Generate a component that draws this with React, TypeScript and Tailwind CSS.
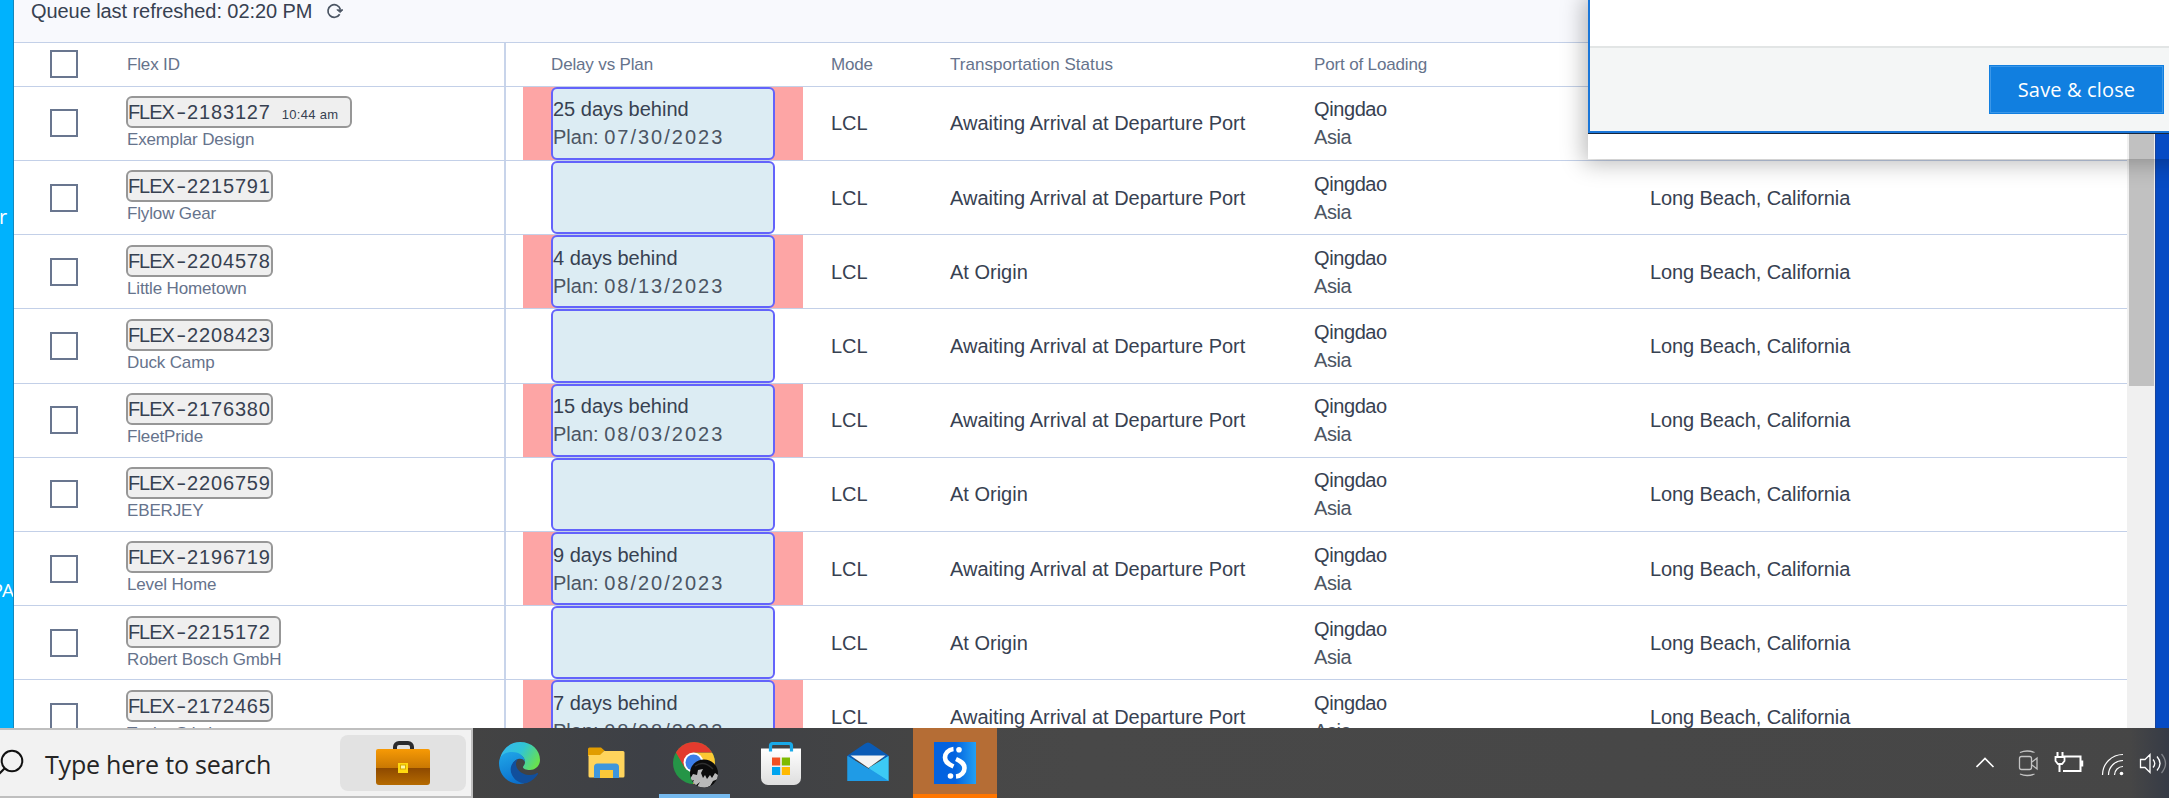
type Shipment = {
  id: string;
  customer: string;
  status: string;
  delay?: string;
  plan?: string;
  time?: string;
  trailing?: boolean;
};

const AWAITING = "Awaiting Arrival at Departure Port";
const ORIGIN = "At Origin";

const shipments: Shipment[] = [
  { id: "2183127", customer: "Exemplar Design", status: AWAITING, delay: "25 days behind", plan: "07/30/2023", time: "10:44 am" },
  { id: "2215791", customer: "Flylow Gear", status: AWAITING },
  { id: "2204578", customer: "Little Hometown", status: ORIGIN, delay: "4 days behind", plan: "08/13/2023" },
  { id: "2208423", customer: "Duck Camp", status: AWAITING },
  { id: "2176380", customer: "FleetPride", status: AWAITING, delay: "15 days behind", plan: "08/03/2023" },
  { id: "2206759", customer: "EBERJEY", status: ORIGIN },
  { id: "2196719", customer: "Level Home", status: AWAITING, delay: "9 days behind", plan: "08/20/2023" },
  { id: "2215172", customer: "Robert Bosch GmbH", status: ORIGIN, trailing: true },
  { id: "2172465", customer: "Taylor Stitch", status: AWAITING, delay: "7 days behind", plan: "08/08/2023" },
];

const COLUMNS = "grid grid-cols-[112px_378px_327px_119px_364px_336px_477px]";

function Checkbox() {
  return (
    <div className="flex items-center pl-9">
      <div className="size-7 border-2 border-[#69768f] bg-white" />
    </div>
  );
}

function HeaderRow() {
  return (
    <div className={`${COLUMNS} h-[43.8px] shrink-0 border-t border-[#c3d0e8] text-[17px] tracking-[-0.15px] text-[#66738c]`}>
      <Checkbox />
      <div className="flex items-center pl-px">Flex ID</div>
      <div className="flex items-center border-l-2 border-[#c8d4ea] pl-[45px]">Delay vs Plan</div>
      <div className="flex items-center">Mode</div>
      <div className="flex items-center tracking-[0.05px]">Transportation Status</div>
      <div className="flex items-center">Port of Loading</div>
      <div />
    </div>
  );
}

function FlexButton({ s }: { s: Shipment }) {
  const width = s.time ? "w-[226px]" : s.trailing ? "w-[155px]" : "w-[147px]";
  return (
    <div className={`${width} flex h-8 items-center whitespace-nowrap rounded-[6px] border-2 border-[#979797] bg-[#efefef] leading-7`}>
      <span className="w-[47px] tracking-[-1.1px]">FLEX</span>
      <span className="flex w-3 justify-center"><span className="scale-x-150">-</span></span>
      <span className="tracking-[0.85px]">{s.id}</span>
      {s.time && <span className="ml-[11px] pt-[5px] text-[13px] tracking-[0.3px]">{s.time}</span>}
    </div>
  );
}

function Row({ s }: { s: Shipment }) {
  return (
    <div className={`${COLUMNS} h-[74.2px] shrink-0 border-t border-[#c3d0e8]`}>
      <Checkbox />
      <div className="pt-[9.4px]">
        <FlexButton s={s} />
        <div className="pl-px text-[17px] leading-[23px] tracking-[-0.15px] text-[#66738c]">{s.customer}</div>
      </div>
      <div className="flex border-l-2 border-[#c8d4ea] pl-[17px]">
        <div className={`${s.delay ? "bg-[#fda5a5]" : ""} flex w-[280px] px-7`}>
          <div className="flex w-[224px] flex-col justify-center whitespace-nowrap rounded-[6px] border-2 border-[#6363fb] bg-[#dcecf3] leading-7">
            {s.delay && <div>{s.delay}</div>}
            {s.plan && (
              <div className="text-[#4b5563]">
                <span>Plan: </span>
                <span className="tracking-[2px]">{s.plan}</span>
              </div>
            )}
          </div>
        </div>
      </div>
      <div className="flex items-center">LCL</div>
      <div className="flex items-center">{s.status}</div>
      <div className="flex flex-col justify-center leading-7 tracking-[-0.4px]">
        <div>Qingdao</div>
        <div className="text-[#4b5563]">Asia</div>
      </div>
      <div className="flex items-center tracking-[-0.1px]">Long Beach, California</div>
    </div>
  );
}

function Briefcase() {
  return (
    <svg width="54" height="44" viewBox="0 0 54 44">
      <defs>
        <linearGradient id="bagTop" x1="0" y1="0" x2="0" y2="1"><stop stopColor="#f79a05" /><stop offset="1" stopColor="#c97803" /></linearGradient>
        <linearGradient id="bagBottom" x1="0" y1="0" x2="0" y2="1"><stop stopColor="#8b4700" /><stop offset="1" stopColor="#b56a00" /></linearGradient>
      </defs>
      <path d="M19 9V6a4 4 0 0 1 4-4h9a4 4 0 0 1 4 4v3" fill="none" stroke="#2b2b2d" strokeWidth="4" />
      <path d="M0 26h54v15a3 3 0 0 1-3 3H3a3 3 0 0 1-3-3z" fill="url(#bagBottom)" />
      <path d="M0 10a2 2 0 0 1 2-2h50a2 2 0 0 1 2 2v17H0z" fill="url(#bagTop)" />
      <rect x="22" y="22" width="10" height="10" fill="#ffd90f" />
      <rect x="24.500" y="24" width="5" height="4" fill="#fff6a0" stroke="#d8a800" />
    </svg>
  );
}

function Edge() {
  return (
    <svg width="42" height="42" viewBox="0 0 42 42">
      <defs>
        <linearGradient id="edgeTop" x1="0" y1="0.2" x2="1" y2="0.6"><stop stopColor="#35b8f0" /><stop offset="0.5" stopColor="#31c5d4" /><stop offset="1" stopColor="#69e14e" /></linearGradient>
        <linearGradient id="edgeLeft" x1="0.3" y1="0" x2="0.6" y2="1"><stop stopColor="#1fa3e6" /><stop offset="1" stopColor="#0a6fcd" /></linearGradient>
      </defs>
      <path d="M1 17C3 7 11 0 21 0c12 0 20 8 20 18 0 6-5 10-10 10-4 0-7-1-7-3 0-1 2-2 2-5 0-5-5-9-12-9-6 0-11 2-13 6z" fill="url(#edgeTop)" />
      <path d="M0 21c0-7 6-11 13-11 8 0 13 5 13 10-1-3-4-4-7-3-6 2-7 9-4 15 3 5 8 9 13 8-2 1-5 2-7 2C9 42 0 33 0 21z" fill="url(#edgeLeft)" />
      <path d="M19 17c-7 3-9 10-6 16 3 6 9 9 15 8 5-2 9-6 11-9 0-1 0-1-1-1-3 2-6 2-9 2-7-1-12-6-12-11 0-2 1-4 2-5z" fill="#114f9c" />
    </svg>
  );
}

function Folder() {
  return (
    <svg width="37" height="32" viewBox="0 0 37 32">
      <path d="M0 9V2a1.500 1.500 0 0 1 1.500-1.500H13L17 4h-1l-4 5z" fill="#e19c00" />
      <path d="M1 8h11l4-4h19a1.500 1.500 0 0 1 1.500 1.500V29a1.500 1.500 0 0 1-1.500 1.500H2A1.500 1.500 0 0 1 .5 29V8z" fill="#ffd45c" />
      <path d="M6 31V20a3.500 3.500 0 0 1 3.500-3.500h18A3.500 3.500 0 0 1 31 20v11h-6v-8H12v8z" fill="#3e96dc" />
      <path d="M12 31v-8h13v8z" fill="#fbc839" />
    </svg>
  );
}

function Chrome() {
  return (
    <svg width="46" height="46" viewBox="0 0 46 46">
      <defs>
        <clipPath id="discClip"><circle cx="21" cy="21" r="21" /></clipPath>
        <clipPath id="avatarClip"><circle cx="31" cy="31.500" r="14" /></clipPath>
      </defs>
      <g clipPath="url(#discClip)">
        <rect width="42" height="42" fill="#259547" />
        <path d="M21 10.500h21V42H20l10-16z" fill="#fcc934" />
        <path d="M2 9V-1h40v11.500H21L12.500 27z" fill="#e33b2e" />
      </g>
      <circle cx="20.500" cy="20.500" r="10" fill="#fff" />
      <circle cx="20.500" cy="20.500" r="8" fill="#3c7ee8" />
      <g clipPath="url(#avatarClip)">
        <rect x="16" y="17" width="30" height="30" fill="#0c0c0c" />
        <path d="M17 37l3-5 4 1 1-5 5-1-2 4 2 5 2-3 2 4 3-4 2 3 3-5 3 2v4l-5 2-3 5-5 2-8-1 3-5-5 4-3-2 2-4-3 1z" fill="#b9b9b9" />
        <path d="M22 24c6-4 12-3 18 3" fill="none" stroke="#2f2f2f" strokeWidth="1.500" />
      </g>
    </svg>
  );
}

function Store() {
  return (
    <svg width="40" height="43" viewBox="0 0 40 43">
      <defs><linearGradient id="storeBag" x1="0" y1="0" x2="0" y2="1"><stop stopColor="#fff" /><stop offset="1" stopColor="#dedede" /></linearGradient></defs>
      <path d="M0 6.500h40V36a7 7 0 0 1-7 7H7a7 7 0 0 1-7-7z" fill="url(#storeBag)" />
      <path d="M9.500 9.500V4A2.500 2.500 0 0 1 12 1.500h16A2.500 2.500 0 0 1 30.500 4v5.500" fill="none" stroke="#19a9e8" strokeWidth="3.200" />
      <path d="M11 15.500h8.200v8H11z" fill="#f25022" /><path d="M20.800 15.500H29v8h-8.200z" fill="#7fba00" />
      <path d="M11 25h8.200v8H11z" fill="#00a4ef" /><path d="M20.800 25H29v8h-8.200z" fill="#ffb900" />
    </svg>
  );
}

function Mail() {
  return (
    <svg width="42" height="40" viewBox="0 0 41 40">
      <path d="M0 13.500 17 2q3.500-3 7 0l17 11.500v4H0z" fill="#0a5bb5" />
      <path d="M0 14l21 13L41 14v25H0z" fill="#1f9be6" />
      <path d="M3 13.500h35L21 26z" fill="#f4f4f4" />
      <path d="M41 14 21 26l20 13z" fill="#3ccaf5" />
      <path d="M0 39V14l41 25z" fill="#1f9be6" />
    </svg>
  );
}

function Swirl() {
  return (
    <svg width="42" height="42" viewBox="0 0 42 42">
      <defs><linearGradient id="swirlBg" x1="0" y1="0" x2="1" y2="0"><stop offset="0.5" stopColor="#0262e0" /><stop offset="1" stopColor="#23a0f2" /></linearGradient></defs>
      <rect width="42" height="42" fill="url(#swirlBg)" />
      <path d="M19.500 7C14 7.500 11 11.500 11 15.500c0 5 4 7 8.500 9" fill="none" stroke="#fff" strokeWidth="4.600" />
      <path d="M22 34.500c5.500-.5 8.500-4.500 8.500-8.500 0-5-4-7-8.500-9" fill="none" stroke="#fff" strokeWidth="4.600" />
      <circle cx="25" cy="7.800" r="2.800" fill="#fff" /><circle cx="16.500" cy="34" r="2.800" fill="#fff" />
    </svg>
  );
}

function Tray() {
  return (
    <div className="flex h-full w-[193px] items-center bg-linear-to-r from-transparent from-80% to-[#363b46]">
      <svg width="193" height="70" viewBox="0 0 193 70" fill="none" stroke="#fff">
        <path d="M.5 39 9 30.500 17.500 39" strokeWidth="1.600" />
        <g stroke="#c4c4c4" strokeWidth="1.300">
          <rect x="43.500" y="28.500" width="12" height="13" rx="2" />
          <path d="M56 34l5-4v11l-5-4M44 24.500q7-3 14.500 0M44 46q7 3 14.500 0" />
        </g>
        <path d="M86 28.500h18.500v14.500H87" strokeWidth="2" />
        <path d="M106 32.500v6" strokeWidth="2.500" />
        <path d="M81.500 24v5M86.500 24v5M83.500 35v9" strokeWidth="2" />
        <path d="M79.500 29h9v4l-2.500 3h-4l-2.500-3z" fill="#444" strokeWidth="1.800" />
        <path d="M126.500 47a20.500 20.500 0 0 1 20.500-20.500M132.500 47A14.500 14.500 0 0 1 147 32.500M138.500 47a8.500 8.500 0 0 1 8.500-8.500" strokeWidth="1.200" />
        <circle cx="145.500" cy="45.500" r="1.800" fill="#fff" stroke="none" />
        <path d="M164.500 31.500h4.500l5-5v18l-5-5h-4.500z" strokeWidth="1.300" />
        <path d="M177 31.500q3.500 4 0 8M181 28.500q6 7 0 14" strokeWidth="1.300" />
        <path d="M185.500 26q8 9.500 0 19" stroke="#80838a" strokeWidth="1.300" />
      </svg>
    </div>
  );
}

function Taskbar() {
  return (
    <div className="flex h-[70px] shrink-0 bg-linear-to-r from-[#424242] via-[#484848] to-[#464646]">
      <div className="flex h-full w-[473px] shrink-0 items-center border-2 border-l-0 border-[#bfbfbf] bg-[#f2f2f2]">
        <svg className="shrink-0" width="24" height="28" viewBox="0 0 24 28" fill="none" stroke="#111" strokeWidth="2">
          <circle cx="12" cy="12" r="10.300" /><path d="M4.500 19.500-2 26" />
        </svg>
        <div className="w-[316px] whitespace-nowrap pl-[21px] pt-1 font-['Open_Sans','Noto_Sans',sans-serif] text-[25px] tracking-[-0.2px] text-[#252525]">Type here to search</div>
        <div className="flex h-14 w-[126px] items-center justify-center rounded-lg bg-[#e2e2e2]"><Briefcase /></div>
      </div>
      <div className="flex w-[440px] shrink-0 items-center bg-linear-to-r from-[#434343] via-[#3d4046] via-40% to-[#444]">
        <div className="w-[89px] pl-[26px]"><Edge /></div>
        <div className="w-[97px] pl-[26px]"><Folder /></div>
        <div className="flex h-full w-[71px] flex-col justify-between">
          <div className="pl-[14px] pt-3.5"><Chrome /></div>
          <div className="h-1 w-[71px] bg-[#76b9ed]" />
        </div>
        <div className="w-[91px] pl-[31px]"><Store /></div>
        <div className="pb-[3px] pl-[26px]"><Mail /></div>
      </div>
      <div className="flex h-full w-[84px] shrink-0 items-center justify-center border-b-4 border-[#ff7600] bg-[#b56d35] pt-[3px]"><Swirl /></div>
      <div className="flex-1" />
      <Tray />
    </div>
  );
}

function DialogCorner() {
  return (
    <div className="absolute left-[1588px] top-0 h-[159px] w-[600px] shadow-[0_0_22px_4px_rgba(0,0,0,0.28)]">
      <div className="flex h-[134px] flex-col border-b border-[#16263c]">
        <div className="flex flex-1 flex-col border-b-2 border-l-2 border-[#1a76d8] bg-white">
          <div className="h-[46px]" />
          <div className="flex flex-1 items-start border-t-2 border-[#e2e5e5] bg-[#f4f6f6] pl-[399px] pt-[17px]">
            <button className="h-[49px] w-[175px] bg-[#117fe0] p-px">
              <span className="flex h-full items-center justify-center border border-[#3b97e8] font-['Open_Sans','Noto_Sans',sans-serif] text-[20px] tracking-[0.15px] text-white">
                Save &amp; close
              </span>
            </button>
          </div>
        </div>
      </div>
      <div className="h-[25px] w-[539px] bg-white" />
    </div>
  );
}

export default function App() {
  return (
    <div className="relative flex h-[798px] w-[2169px] flex-col overflow-hidden bg-white font-['Liberation_Sans',Arial,sans-serif] text-[20px] text-[#374151]">
      <div className="relative flex h-[728px] shrink-0 overflow-hidden">
        <div className="flex w-3.5 shrink-0 flex-col justify-between overflow-hidden border-r border-[#1488bd] bg-[#00b2fd] pb-[124px] pt-[203px] font-['Open_Sans','Noto_Sans',sans-serif] text-[20px] leading-7 text-white">
          <div className="-ml-px">r</div>
          <div className="flex justify-end text-[19px] tracking-[-1px]">PA</div>
        </div>
        <div className="flex w-[2113px] shrink-0 flex-col">
          <div className="flex h-[42px] shrink-0 bg-[#f8f9fd] pl-[17px]">
            <div className="flex h-[21px] items-center gap-3.5">
              <span className="tracking-[-0.07px]">Queue last refreshed: 02:20 PM</span>
              <svg width="19" height="18" viewBox="0 0 19 18" fill="none" stroke="#4b5563" strokeWidth="1.700">
                <path d="M13.700 12.200A6.300 6.300 0 1 1 14.400 7.500" />
                <path d="M10.800 7.800h6.200l-2.800 2.800z" fill="#4b5563" strokeWidth="0.800" />
              </svg>
            </div>
          </div>
          <HeaderRow />
          {shipments.map((s) => <Row key={s.id} s={s} />)}
        </div>
        <div className="w-7 shrink-0 bg-[#f0f0f0] pl-0.5">
          <div className="h-[386px] w-[25px] bg-[#c1c1c1]" />
        </div>
        <div className="flex-1 border-l border-[#16439c] bg-[#064bc4]" />
        <DialogCorner />
      </div>
      <Taskbar />
    </div>
  );
}
